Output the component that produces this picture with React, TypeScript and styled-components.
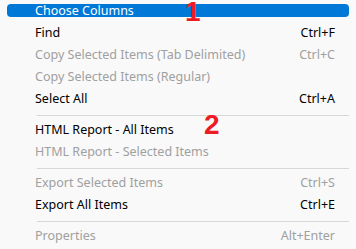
import React from "react";
import styled, {createGlobalStyle} from "styled-components";

const GlobalStyle = createGlobalStyle`
  html, body {
    margin: 0;
    padding: 0;
    background: #f9f9f9;
  }
`

type Item = {
    label: string;
    shortcut?: string;
    disabled?: boolean;
    separatorAfter?: boolean;
}

const items: Item[] = [
    {label: "Find", shortcut: "Ctrl+F"},
    {label: "Copy Selected Items (Tab Delimited)", shortcut: "Ctrl+C", disabled: true},
    {label: "Copy Selected Items (Regular)", disabled: true},
    {label: "Select All", shortcut: "Ctrl+A", separatorAfter: true},
    {label: "HTML Report - All Items"},
    {label: "HTML Report - Selected Items", disabled: true, separatorAfter: true},
    {label: "Export Selected Items", shortcut: "Ctrl+S", disabled: true},
    {label: "Export All Items", shortcut: "Ctrl+E", separatorAfter: true},
    {label: "Properties", shortcut: "Alt+Enter", disabled: true},
];

export default function App() {
    return <>
        <GlobalStyle/>
        <Menu>
            <HighlightRow>Choose Columns</HighlightRow>
            {items.map(item => <React.Fragment key={item.label}>
                <Row $disabled={item.disabled}>
                    <span>{item.label}</span>
                    {item.shortcut && <span>{item.shortcut}</span>}
                </Row>
                {item.separatorAfter && <Separator/>}
            </React.Fragment>)}
            <Marker $left={185} $top={0}>1</Marker>
            <Marker $left={204} $top={113}>2</Marker>
        </Menu>
    </>
}

const Menu = styled.div`
  position: relative;
  width: 356px;
  height: 249px;
  overflow: hidden;
  background: #f9f9f9;
  font-family: "Noto Sans", "Liberation Sans", sans-serif;
  font-size: 12.5px;
`

const HighlightRow = styled.div`
  margin: 4px 7px 5px 7px;
  height: 13px;
  line-height: 13px;
  padding-left: 28px;
  border-radius: 4px;
  background: #0078d7;
  color: #ffffff;
  white-space: nowrap;
`

const Row = styled.div<{ $disabled?: boolean }>`
  display: flex;
  justify-content: space-between;
  height: 22px;
  line-height: 22px;
  padding: 0 21px 0 35px;
  color: ${p => p.$disabled ? "#a0a0a0" : "#000000"};
  white-space: nowrap;
`

const Separator = styled.div`
  height: 1px;
  margin: 5px 7px 3px 37px;
  background: #d7d7d7;
`

const Marker = styled.div<{ $left: number; $top: number }>`
  position: absolute;
  left: ${p => p.$left}px;
  top: ${p => p.$top}px;
  font-family: "Liberation Sans", Arial, sans-serif;
  font-weight: bold;
  font-size: 28px;
  line-height: 24px;
  color: #ed1c24;
`
